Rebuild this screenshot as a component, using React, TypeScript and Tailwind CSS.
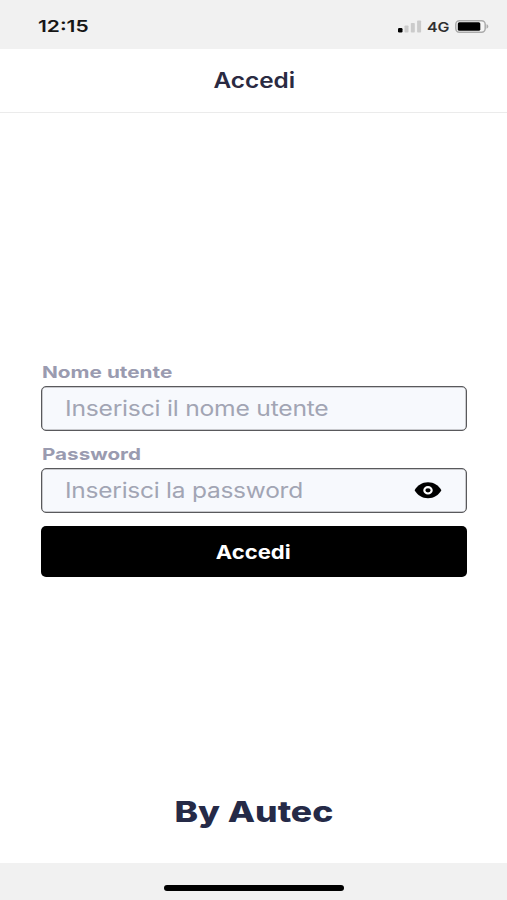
import { type ReactNode } from "react";

function StatusBar() {
  return (
    <div className="flex h-[49px] shrink-0 items-start justify-between bg-[#f1f1f1] pl-[38px] pr-[18.5px] pt-[16px]">
      <span className="origin-left scale-x-[1.27] text-[16.5px] leading-[20px] font-semibold text-[#161616]">
        12:15
      </span>
      <div className="flex h-5 items-center">
        <svg width="25" height="13" viewBox="0 0 25 13">
          <rect x="0" y="8" width="4.5" height="4.5" rx="1.2" fill="#000" />
          <rect x="6.5" y="5.5" width="4" height="7" rx="0.8" fill="#cbcbcb" />
          <rect x="12.8" y="3" width="4" height="9.5" rx="0.8" fill="#cbcbcb" />
          <rect x="19.1" y="0.5" width="4" height="12" rx="0.8" fill="#cbcbcb" />
        </svg>
        <span className="ml-[4px] mt-px w-[28px] origin-left scale-x-[1.18] text-[13.5px] leading-[20px] font-semibold text-[#303030]">
          4G
        </span>
        <svg width="34" height="13" viewBox="0 0 34 13">
          <rect x="0.8" y="0.8" width="29.4" height="11.4" rx="3.6" fill="#f6f6f6" stroke="#ababab" strokeWidth="1.5" />
          <rect x="2.8" y="2.2" width="22.5" height="8.6" rx="1.6" fill="#000" />
          <path d="M31.5 4.3c1.2.4 1.8 1.2 1.8 2.2s-.6 1.8-1.8 2.2z" fill="#ababab" />
        </svg>
      </div>
    </div>
  );
}

function EyeIcon() {
  return (
    <svg className="-mt-px" width="28" height="18" viewBox="0 0 28 18">
      <path d="M.6 9.3C3.4 4.4 8 1.3 14 1.3s10.6 3.1 13.4 8C24.6 14.2 20 17.3 14 17.3S3.4 14.2.6 9.3z" fill="#000" />
      <ellipse cx="14" cy="9.3" rx="3.7" ry="3.2" fill="none" stroke="#fff" strokeWidth="2.1" />
    </svg>
  );
}

type FieldProps = {
  label: ReactNode;
  placeholder: ReactNode;
  icon?: ReactNode;
};

function Field({ label, placeholder, icon }: FieldProps) {
  return (
    <div>
      <div className="flex h-[28px] items-center pl-px text-[16.5px] leading-[28px] font-bold text-[#9a9bb0]">
        {label}
      </div>
      <div className="flex h-[45px] items-center justify-between rounded-[5px] border border-[#59595c] bg-[#f7f9fd] pl-[22.5px] pr-[24.5px] text-[21px] tracking-[-0.2px] text-[#a2a5b4] shadow-[inset_0_0_0_0.5px_#9a9a9d]">
        {placeholder}
        {icon}
      </div>
    </div>
  );
}

export default function App() {
  return (
    <div className="flex h-[900px] w-[507px] flex-col overflow-hidden bg-white font-['Inter',sans-serif]">
      <StatusBar />
      <header className="flex h-[64px] shrink-0 items-center justify-center border-b border-[#ebebeb]">
        <h1 className="scale-x-[1.16] pl-px text-[21px] leading-[28px] font-semibold text-[#2a2a42]">Accedi</h1>
      </header>

      <main className="flex flex-1 flex-col pl-[41px] pr-[40px] pt-[245px]">
        <div className="flex flex-col gap-[9px]">
          <Field
            label={<span className="origin-left scale-x-[1.26]">Nome utente</span>}
            placeholder={<span className="origin-left scale-x-[1.175]">Inserisci il nome utente</span>}
          />
          <Field
            label={<span className="origin-left scale-x-[1.25]">Password</span>}
            placeholder={<span className="origin-left scale-x-[1.165]">Inserisci la password</span>}
            icon={<EyeIcon />}
          />
        </div>
        <button className="mt-[13px] flex h-[51px] items-center justify-center rounded-[5px] bg-black text-white">
          <span className="scale-x-[1.16] pt-[2px] pr-px text-[19px] leading-[28px] font-bold">Accedi</span>
        </button>
        <div className="mt-auto flex justify-center pb-[31px]">
          <span className="scale-x-[1.225] text-[29px] leading-[40px] font-extrabold text-[#252a47]">By Autec</span>
        </div>
      </main>

      <footer className="flex h-[37px] shrink-0 justify-center bg-[#f1f1f1] pt-[22px] pl-px">
        <div className="h-[6px] w-[180px] rounded-full bg-black" />
      </footer>
    </div>
  );
}
